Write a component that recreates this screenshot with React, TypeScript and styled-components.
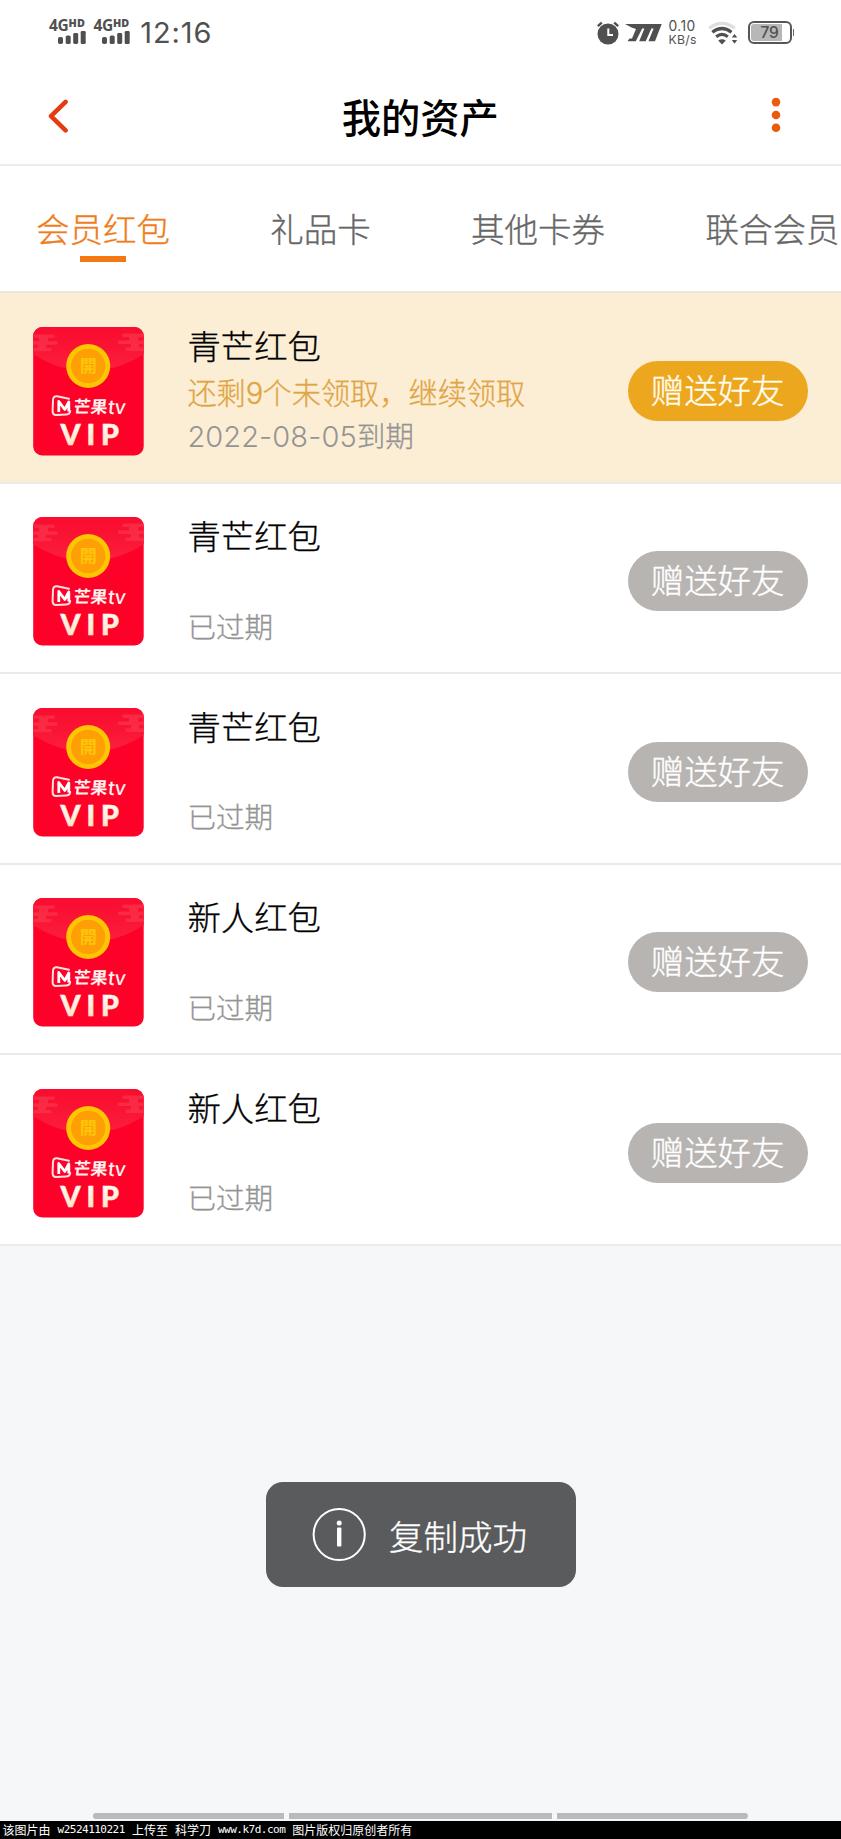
import React from 'react';
import styled, { createGlobalStyle } from 'styled-components';

const GlobalStyle = createGlobalStyle`
  * { box-sizing: border-box; }
  body { margin: 0; background: #f5f7f9; }
`;

const cjk = `'Noto Sans CJK SC', sans-serif`;
const latin = `Inter, 'Noto Sans CJK SC', sans-serif`;

const Page = styled.div`
  position: relative;
  display: flex;
  flex-direction: column;
  width: 841px;
  height: 1839px;
  overflow: hidden;
  background: #f5f7f9;
  font-family: ${cjk};
  font-weight: 300;
`;

const StatusBar = styled.div`
  display: flex;
  justify-content: space-between;
  height: 66px;
  padding: 0 47px 0 49px;
  background: #fff;
  color: #505050;
`;

const StatusGroup = styled.div`
  display: flex;
  align-items: flex-start;
`;

const Signal = styled.div`
  width: 44.4px;
  padding-top: 18px;
`;

const SignalLabel = styled.div`
  display: flex;
  height: 13px;
  font: 700 15.5px/15px 'Open Sans', sans-serif;
  letter-spacing: -0.3px;
`;

const SignalHd = styled.span`
  font-size: 10.8px;
  font-weight: 800;
  line-height: 10.5px;
  letter-spacing: 0.2px;
`;

const SignalBars = styled.svg`
  display: block;
  margin-left: 9px;
`;

const Clock = styled.div`
  margin: 15px 0 0 2.5px;
  font: 400 29px/36px ${latin};
  letter-spacing: 0.9px;
`;

const StatusIcon = styled.svg<{ $left?: number }>`
  display: block;
  margin: 20px 0 0 ${p => p.$left ?? 0}px;
`;

const NetSpeed = styled.div`
  width: 28px;
  margin: 20px 0 0 7px;
  font: 400 13.8px/13px ${latin};
  letter-spacing: 0.4px;
  white-space: nowrap;
`;

const SpeedUnit = styled.div`
  font-size: 12.2px;
  line-height: 13px;
  letter-spacing: 0.3px;
`;

const Battery = styled.div`
  display: flex;
  align-items: center;
  margin: 21px 0 0 10px;
  height: 23px;
`;

const BatteryBody = styled.div`
  width: 44px;
  height: 23px;
  border: 2px solid #565656;
  border-radius: 6px;
  padding: 1px;
`;

const BatteryFill = styled.div`
  width: 31px;
  height: 17px;
  padding-left: 10px;
  border-radius: 3px 0 0 3px;
  background: #b7b7b7;
  font: 500 15.5px/17.5px ${latin};
  letter-spacing: -0.2px;
`;

const BatteryTip = styled.div`
  width: 1.5px;
  height: 7px;
  margin-left: 1px;
  background: #6a6a6a;
`;

const Header = styled.header`
  display: flex;
  align-items: flex-start;
  justify-content: space-between;
  height: 100px;
  padding: 33px 59.5px 0 48px;
  border-bottom: 2px solid #ececec;
  background: #fff;
`;

const Title = styled.h1`
  margin: -11.5px 0 0 2px;
  font: 500 39.3px/56px ${cjk};
  color: #000;
`;

const Tabs = styled.nav`
  display: flex;
  height: 125px;
  padding-left: 36px;
  overflow: hidden;
  background: #fff;
`;

const Tab = styled.div<{ $active?: boolean; $gap: number }>`
  display: flex;
  flex: none;
  flex-direction: column;
  align-items: center;
  margin-right: ${p => p.$gap}px;
  padding-top: 37px;
  font-size: 33.5px;
  line-height: 50px;
  color: ${p => (p.$active ? '#ef7d1c' : '#666')};
  -webkit-text-stroke: 0.35px currentColor;
`;

const TabMark = styled.div`
  width: 46px;
  height: 6px;
  margin-top: 3px;
  background: #f4770f;
`;

const List = styled.main`
  display: flex;
  flex-direction: column;
  border-top: 2px solid #ebe7e0;
`;

const Row = styled.section<{ $highlight?: boolean }>`
  display: flex;
  align-items: flex-start;
  height: 190.5px;
  padding: 33.6px 33.4px 0 33.4px;
  border-bottom: 2px solid #e8ebea;
  background: ${p => (p.$highlight ? '#fcedd5' : '#fff')};
`;

const Info = styled.div`
  display: flex;
  flex: 1;
  flex-direction: column;
  margin-left: 43px;
  white-space: nowrap;
  -webkit-text-stroke: 0.3px currentColor;
`;

const Name = styled.div`
  height: 45px;
  font-size: 33.4px;
  line-height: 35px;
  color: #000;
`;

const Remaining = styled.div`
  height: 45.5px;
  font: 300 29.2px/39px ${cjk};
  color: #dfa544;
`;

const Digit = styled.span`
  font-family: Inter, sans-serif;
  letter-spacing: -0.8px;
`;

const Expiry = styled.div`
  font: 300 28.6px/36px ${cjk};
  color: #949494;
`;

const DateText = styled.span`
  font: 300 29px/36px ${latin};
  letter-spacing: 0.1px;
  -webkit-text-stroke: 0;
`;

const GiftButton = styled.button<{ $enabled?: boolean }>`
  width: 180px;
  height: 60px;
  margin-top: 34px;
  padding: 0 0 4px;
  border: 0;
  border-radius: 30px;
  background: ${p => (p.$enabled ? '#eca71f' : '#b8b4b1')};
  color: ${p => (p.$enabled ? '#fffdf0' : '#fff')};
  font: 300 33.4px/56px ${cjk};
  -webkit-text-stroke: 0.35px currentColor;
`;

const Toast = styled.div`
  position: absolute;
  top: 1482px;
  left: 265.5px;
  display: flex;
  align-items: center;
  width: 310px;
  height: 105px;
  padding-left: 46px;
  border-radius: 17px;
  background: #5a5b5d;
  color: #fff;
  font-size: 34.5px;
  line-height: 50px;
`;

const ToastText = styled.span`
  margin: 0 0 0 22.5px;
  -webkit-text-stroke: 0.35px currentColor;
`;

const NavBar = styled.div`
  display: flex;
  gap: 5px;
  margin-top: auto;
  padding: 0 93px 2px;
`;

const NavSegment = styled.div<{ $width: number; $radius?: string }>`
  width: ${p => p.$width}px;
  height: 6px;
  border-radius: ${p => p.$radius ?? '0'};
  background: #b9babc;
`;

const Credit = styled.footer`
  display: flex;
  height: 18px;
  gap: 7px;
  padding-left: 2.5px;
  background: #000;
  color: #fff;
  font: 400 12px/17px ${cjk};
  white-space: nowrap;
`;

const CreditLatin = styled.span`
  font: 400 11px/18px 'DejaVu Sans Mono', monospace;
  letter-spacing: -0.5px;
`;

const SignalMeter = () => (
  <Signal>
    <SignalLabel>4G<SignalHd>HD</SignalHd></SignalLabel>
    <SignalBars width="28" height="13" fill="#505050">
      <rect x="0" y="6" width="5" height="7" rx="1.8" />
      <rect x="7.7" y="4.5" width="5" height="8.5" rx="1.6" />
      <rect x="15.2" y="2" width="5" height="11" rx="1.4" />
      <rect x="22.7" y="0" width="5" height="13" rx="1.2" />
    </SignalBars>
  </Signal>
);

const AlarmIcon = () => (
  <StatusIcon width="24" height="26" viewBox="0 0 24 26">
    <circle cx="12" cy="14" r="10.5" fill="#505050" />
    <path d="M1.8 6.2 5.8 2.6M22.2 6.2 18.2 2.6" stroke="#505050" strokeWidth="2.4" />
    <path d="M12.3 8.5V15H17" fill="none" stroke="#fff" strokeWidth="2" />
  </StatusIcon>
);

const SpeedModeIcon = () => (
  <StatusIcon $left={5} width="37" height="24" viewBox="0 0 37 24" fill="#505050">
    <path d="M0 4H36.7L30 21.3H23.5L28.6 8.5H26.4L20.7 21.3H14.2L19.4 8.5H17.2L10.8 21.3H2.5L4.5 18.5H7L11 9L6.5 7.5Z" />
  </StatusIcon>
);

const WifiIcon = () => (
  <StatusIcon $left={11} width="30" height="26" viewBox="0 0 30 26" fill="none">
    <path d="M1.2 8.3Q14 -1.5 26.8 8.3" stroke="#dedede" strokeWidth="3.2" />
    <path d="M4.3 12.2Q14 4.8 23.5 12.2M8.2 16.7Q14 12.2 19.8 16.7" stroke="#505050" strokeWidth="3.2" />
    <path d="M10.2 20.5Q14 18 17.8 20.5L14 24.5Z" fill="#505050" />
    <path d="M23.8 17.5 26.5 14 29.2 17.5ZM23.8 20 26.5 23.7 29.2 20Z" fill="#505050" />
  </StatusIcon>
);

const BackIcon = () => (
  <svg width="20" height="35" viewBox="0 0 20 35" fill="none">
    <path d="M17.6 2.8 3 17.2 17.6 31.4" stroke="#e63a10" strokeWidth="4.5" strokeLinecap="round" strokeLinejoin="round" />
  </svg>
);

const MoreIcon = () => (
  <svg width="11" height="38" viewBox="0 0 11 38" fill="#ec5a0c">
    <circle cx="5" cy="3.1" r="4.3" />
    <circle cx="5" cy="16" r="4.3" />
    <circle cx="5" cy="28.8" r="4.3" />
  </svg>
);

const MoreWrap = styled.div`
  display: flex;
  svg { overflow: visible; }
`;

const Packet = styled.svg`
  display: block;
  flex: none;
`;

const RedPacket = ({ id }: { id: string }) => (
  <Packet width="111" height="129" viewBox="0 0 111 129">
    <defs>
      <clipPath id={id}><rect x="0.2" width="110.5" height="128.5" rx="9" /></clipPath>
      <linearGradient id={id + 'g'} x1="0" y1="0" x2="0" y2="1">
        <stop offset="0" stopColor="#fa0c2f" />
        <stop offset="1" stopColor="#fb1f3c" />
      </linearGradient>
      <linearGradient id={id + 'v'} x1="0" y1="0" x2="0" y2="1">
        <stop offset="0" stopColor="#fff" />
        <stop offset="1" stopColor="#fde0bd" />
      </linearGradient>
    </defs>
    <g clipPath={`url(#${id})`}>
      <rect width="111" height="129" fill="#fd0129" />
      <path d="M0 0H111V27Q85 44 55.5 44T0 27Z" fill={`url(#${id}g)`} />
      <g fill="#fb3b50" opacity="0.6">
        <path d="M1 7.5H21Q22.5 9 21 10.7H15V14.2H24Q25.5 16 24 17.7H13V21H18Q19.5 22.5 18 24.3H0V21H5V17.7H0V14.2H6V10.7H1Z" />
        <path d="M110 6.5H90Q88.500 8 90 10H96V13.500H85.500Q84 15.200 85.500 17H98V20.500H93Q91.500 22.200 93 24H111V20.500H106V17H111V13.500H105V10H110Z" />
      </g>
    </g>
    <circle cx="55.2" cy="39" r="22" fill="#fdc603" />
    <circle cx="55.2" cy="39" r="17.2" fill="#fe9f05" />
    <text x="55.2" y="44.8" textAnchor="middle" fontFamily="Noto Sans CJK TC, sans-serif" fontSize="17" fontWeight="700" fill="#fec50b">開</text>
    <path d="M37.2 84Q37 87.300 33.500 87.500L23 88Q19.600 88 19.600 84L20 73Q20.200 68.800 24 69.200L36 71.800" fill="none" stroke="#fde3df" strokeWidth="2" strokeLinecap="round" />
    <path d="M25.8 85V74.500L31.800 82.500L35.800 75V84.500" fill="none" stroke="#fff" strokeWidth="2.8" strokeLinejoin="round" />
    <text transform="translate(40 86) skewX(-6)" fontFamily="Noto Sans CJK SC, sans-serif" fontSize="17" fontWeight="700" fill="#fff0ec">芒果</text>
    <text transform="translate(74.500 86.500) skewX(-6)" fontFamily="Inter, sans-serif" fontSize="19.500" fontWeight="500" letterSpacing="-0.6" fill="#fff0ec">tv</text>
    <text x="27.4 53.5 68" y="118" fontFamily="Lato, sans-serif" fontSize="28.6" fontWeight="900" fill={`url(#${id}v)`} stroke={`url(#${id}v)`} strokeWidth="0.5">VIP</text>
  </Packet>
);

const InfoIcon = () => (
  <svg width="55" height="55" viewBox="0 0 55 55">
    <circle cx="27.2" cy="27.5" r="25.6" fill="none" stroke="#fff" strokeWidth="2" />
    <circle cx="27.2" cy="16" r="2.5" fill="#fff" />
    <rect x="25" y="20.5" width="4.4" height="19" rx="1" fill="#fff" />
  </svg>
);

const packets = [
  { name: '青芒红包', active: true },
  { name: '青芒红包', active: false },
  { name: '青芒红包', active: false },
  { name: '新人红包', active: false },
  { name: '新人红包', active: false },
];

export default function App() {
  return (
    <Page>
      <GlobalStyle />
      <StatusBar>
        <StatusGroup>
          <SignalMeter />
          <SignalMeter />
          <Clock>12:16</Clock>
        </StatusGroup>
        <StatusGroup>
          <AlarmIcon />
          <SpeedModeIcon />
          <NetSpeed>0.10<SpeedUnit>KB/s</SpeedUnit></NetSpeed>
          <WifiIcon />
          <Battery>
            <BatteryBody><BatteryFill>79</BatteryFill></BatteryBody>
            <BatteryTip />
          </Battery>
        </StatusGroup>
      </StatusBar>
      <Header>
        <BackIcon />
        <Title>我的资产</Title>
        <MoreWrap><MoreIcon /></MoreWrap>
      </Header>
      <Tabs>
        <Tab $active $gap={100.3}>会员红包<TabMark /></Tab>
        <Tab $gap={100.3}>礼品卡</Tab>
        <Tab $gap={100.3}>其他卡券</Tab>
        <Tab $gap={0}>联合会员</Tab>
      </Tabs>
      <List>
        {packets.map((p, i) => (
          <Row key={i} $highlight={p.active}>
            <RedPacket id={`packet${i}`} />
            <Info>
              <Name>{p.name}</Name>
              <Remaining>{p.active && <>还剩<Digit>9</Digit>个未领取，继续领取</>}</Remaining>
              <Expiry>{p.active ? <><DateText>2022-08-05</DateText>到期</> : '已过期'}</Expiry>
            </Info>
            <GiftButton $enabled={p.active}>赠送好友</GiftButton>
          </Row>
        ))}
      </List>
      <NavBar>
        <NavSegment $width={191} $radius="3px 0 0 3px" />
        <NavSegment $width={263} />
        <NavSegment $width={191} $radius="0 3px 3px 0" />
      </NavBar>
      <Credit>
        <span>该图片由</span>
        <CreditLatin>w2524110221</CreditLatin>
        <span>上传至</span>
        <span>科学刀</span>
        <CreditLatin>www.k7d.com</CreditLatin>
        <span>图片版权归原创者所有</span>
      </Credit>
      <Toast role="status">
        <InfoIcon />
        <ToastText>复制成功</ToastText>
      </Toast>
    </Page>
  );
}
